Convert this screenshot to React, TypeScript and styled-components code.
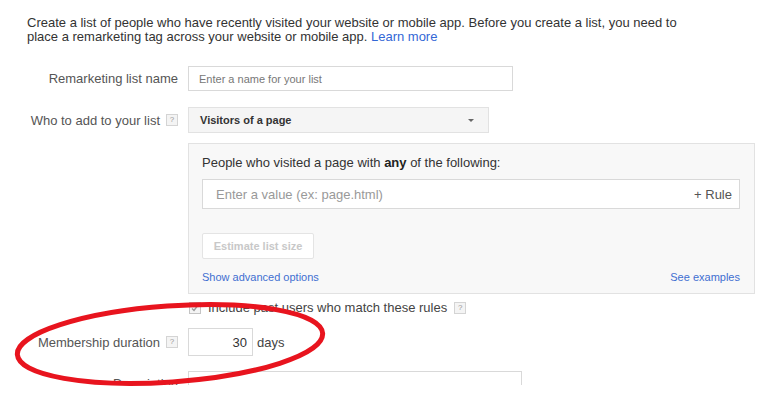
import styled, { createGlobalStyle } from 'styled-components'

const GlobalStyle = createGlobalStyle`
  html, body {
    margin: 0;
    padding: 0;
    background: #fff;
  }
  body {
    font-family: Arial, "Liberation Sans", sans-serif;
    color: #444;
  }
`

function HelpIcon() {
  return <Help>?</Help>
}

export default function App() {
  return (
    <>
      <GlobalStyle />
      <Page>
        <Intro>
          Create a list of people who have recently visited your website or mobile app. Before you
          create a list, you need to
          <br />
          place a remarketing tag across your website or mobile app. <Link>Learn more</Link>
        </Intro>

        <Form>
          <FieldRow $top={22}>
            <Label>Remarketing list name</Label>
            <TextInput placeholder="Enter a name for your list" $width={325} />
          </FieldRow>

          <FieldRow $top={16}>
            <Label>
              Who to add to your list <HelpIcon />
            </Label>
            <Select>
              <span>Visitors of a page</span>
              <Caret />
            </Select>
          </FieldRow>

          <FieldRow $top={10}>
            <span />
            <Panel>
              <PanelTitle>
                People who visited a page with <b>any</b> of the following:
              </PanelTitle>
              <RuleBox>
                <RulePlaceholder>Enter a value (ex: page.html)</RulePlaceholder>
                <RuleAdd>+ Rule</RuleAdd>
              </RuleBox>
              <EstimateButton>Estimate list size</EstimateButton>
              <PanelLinks>
                <SmallLink>Show advanced options</SmallLink>
                <SmallLink>See examples</SmallLink>
              </PanelLinks>
            </Panel>
          </FieldRow>

          <FieldRow $top={6}>
            <span />
            <CheckRow>
              <CheckBox>
                <svg width="10" height="10" viewBox="0 0 10 10">
                  <path d="M2 5.5 L4 7.5 L8.5 1.5" fill="none" stroke="#999" strokeWidth="1.4" />
                </svg>
              </CheckBox>
              Include past users who match these rules <HelpIcon />
            </CheckRow>
          </FieldRow>

          <FieldRow $top={13}>
            <Label>
              Membership duration <HelpIcon />
            </Label>
            <DurationRow>
              <NumberInput defaultValue="30" />
              <Unit>days</Unit>
            </DurationRow>
          </FieldRow>

          <FieldRow $top={15}>
            <Label>Description</Label>
            <TextInput $width={334} />
          </FieldRow>
        </Form>

        <Highlight width="783" height="419" viewBox="0 0 783 419">
          <ellipse
            cx="170"
            cy="344"
            rx="153"
            ry="38"
            transform="rotate(-4 170 344)"
            fill="none"
            stroke="#e8141e"
            strokeWidth="5"
          />
        </Highlight>
      </Page>
    </>
  )
}

const Page = styled.div`
  position: relative;
  width: 783px;
  height: 419px;
  overflow: hidden;
`

const Intro = styled.div`
  padding: 16px 0 0 27px;
  font-size: 13px;
  line-height: 14px;
  color: #333;
`

const Link = styled.a`
  color: #3367d6;
  cursor: pointer;
`

const Form = styled.div`
  height: 341px;
  overflow: hidden;
`

const FieldRow = styled.div<{ $top: number }>`
  display: grid;
  grid-template-columns: 178px auto;
  column-gap: 10px;
  align-items: center;
  justify-content: start;
  margin-top: ${(p) => p.$top}px;
`

const Label = styled.div`
  display: flex;
  align-items: center;
  justify-content: flex-end;
  gap: 6px;
  font-size: 13px;
  color: #555;
  white-space: nowrap;
`

const Help = styled.span`
  display: inline-flex;
  align-items: center;
  justify-content: center;
  width: 10px;
  height: 10px;
  border: 1px solid #d4d4d4;
  background: #f4f4f4;
  color: #999;
  font-size: 8px;
  line-height: 1;
`

const TextInput = styled.input<{ $width: number }>`
  box-sizing: border-box;
  width: ${(p) => p.$width}px;
  height: 25px;
  margin: 0;
  padding: 0 10px;
  border: 1px solid #d9d9d9;
  font-family: Arial, "Liberation Sans", sans-serif;
  font-size: 11px;
  color: #333;
  &::placeholder {
    color: #777;
  }
`

const Select = styled.div`
  box-sizing: border-box;
  width: 301px;
  height: 26px;
  display: flex;
  align-items: center;
  justify-content: space-between;
  padding: 0 14px 0 11px;
  background: #f5f5f5;
  border: 1px solid #e2e2e2;
  font-size: 11px;
  font-weight: bold;
  color: #333;
`

const Caret = styled.span`
  width: 0;
  height: 0;
  border-left: 3px solid transparent;
  border-right: 3px solid transparent;
  border-top: 3px solid #666;
`

const Panel = styled.div`
  box-sizing: border-box;
  width: 567px;
  height: 151px;
  padding: 11px 14px 0 13px;
  background: #f8f8f8;
  border: 1px solid #e2e2e2;
`

const PanelTitle = styled.div`
  font-size: 13px;
  color: #333;
  b {
    color: #222;
  }
`

const RuleBox = styled.div`
  box-sizing: border-box;
  height: 30px;
  margin-top: 9px;
  display: flex;
  align-items: center;
  justify-content: space-between;
  padding: 0 7px 0 13px;
  background: #fff;
  border: 1px solid #d9d9d9;
  font-size: 13px;
`

const RulePlaceholder = styled.span`
  color: #999;
`

const RuleAdd = styled.span`
  color: #555;
`

const EstimateButton = styled.div`
  box-sizing: border-box;
  width: 112px;
  height: 26px;
  margin-top: 24px;
  display: flex;
  align-items: center;
  justify-content: center;
  background: #fff;
  border: 1px solid #e4e4e4;
  border-radius: 2px;
  font-size: 11px;
  font-weight: bold;
  color: #c8c8c8;
`

const PanelLinks = styled.div`
  display: flex;
  justify-content: space-between;
  margin-top: 12px;
`

const SmallLink = styled.a`
  font-size: 11px;
  color: #3f6fd1;
  cursor: pointer;
`

const CheckRow = styled.div`
  display: flex;
  align-items: center;
  gap: 7px;
  font-size: 13px;
  color: #444;
  margin-left: 1px;
`

const CheckBox = styled.span`
  box-sizing: border-box;
  width: 12px;
  height: 12px;
  display: inline-flex;
  align-items: center;
  justify-content: center;
  border: 1px solid #c4c4c4;
  background: #f4f4f4;
`

const DurationRow = styled.div`
  display: flex;
  align-items: center;
  gap: 4px;
`

const NumberInput = styled.input`
  box-sizing: border-box;
  width: 65px;
  height: 28px;
  margin: 0;
  padding: 0 5px;
  border: 1px solid #d9d9d9;
  text-align: right;
  font-family: Arial, "Liberation Sans", sans-serif;
  font-size: 13px;
  color: #333;
`

const Unit = styled.span`
  font-size: 13px;
  color: #444;
`

const Highlight = styled.svg`
  position: absolute;
  left: 0;
  top: 0;
  pointer-events: none;
`
